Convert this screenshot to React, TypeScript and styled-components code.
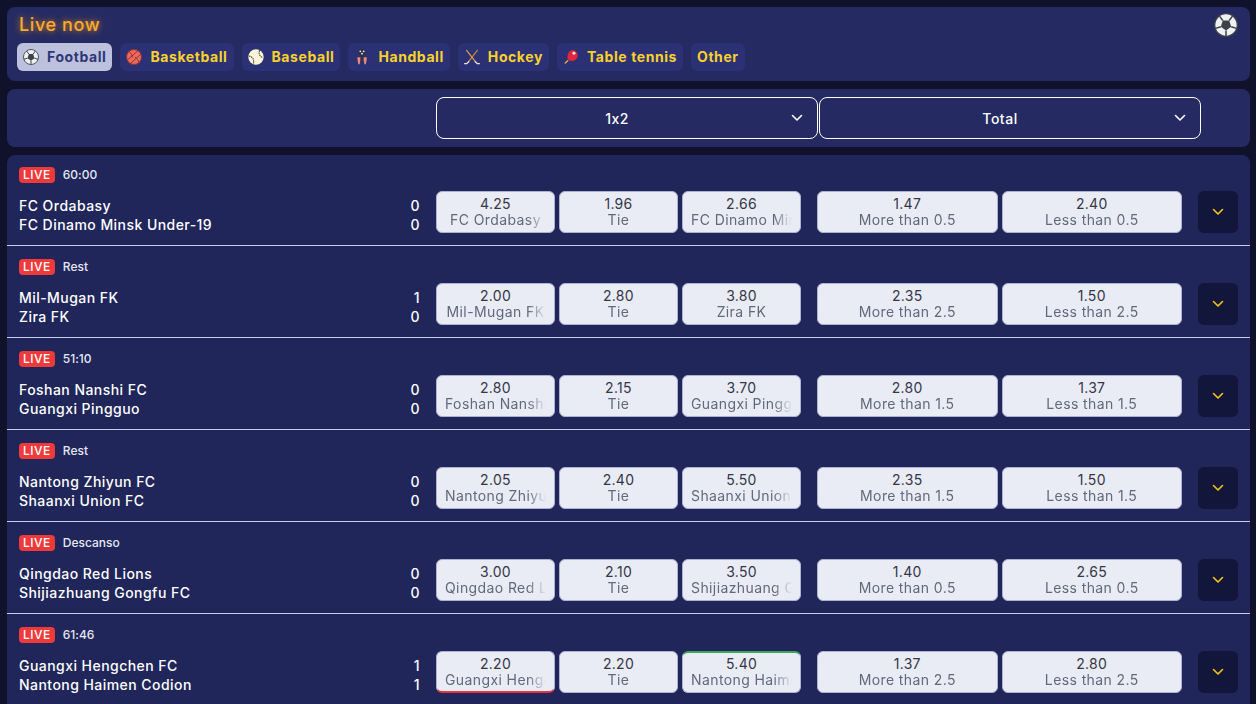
import React from 'react';
import styled, { createGlobalStyle } from 'styled-components';

const GlobalStyle = createGlobalStyle`
  html, body {
    margin: 0;
    padding: 0;
    height: 704px;
    overflow: hidden;
    background: #10122b;
    font-family: 'Inter', 'Liberation Sans', sans-serif;
    font-feature-settings: 'calt' 0;
  }
`;

const SoccerBall = ({ size = 16 }: { size?: number }) => (
  <svg width={size} height={size} viewBox="0 0 24 24">
    <circle cx="12" cy="12" r="11.3" fill="#f0f0f0" stroke="#3b424c" strokeWidth="1.300" />
    <path
      d="M15.200 7.550L18.500 3.100M17.200 13.700L22.500 15.400M12 17.500V23M6.800 13.700L1.500 15.400M8.800 7.550L5.500 3.100"
      stroke="#3b424c"
      strokeWidth="1.500"
    />
    <path d="M15.200 7.550L17.200 13.700 12 17.500 6.800 13.700 8.800 7.550z" fill="#3b424c" />
  </svg>
);

const Basketball = () => (
  <svg width="16" height="16" viewBox="0 0 24 24">
    <circle cx="12" cy="12" r="11.500" fill="#ef6a5e" />
    <g fill="none" stroke="#7c2c28" strokeWidth="1.300">
      <circle cx="12" cy="12" r="11.200" />
      <path d="M2 16.500L18 2.500M6.500 22L22 8M5 4c3 3 4.500 6 4.500 8.500M13.500 12c3 2 5 5 5.500 8" />
    </g>
  </svg>
);

const Baseball = () => (
  <svg width="16" height="16" viewBox="0 0 24 24">
    <circle cx="12" cy="12" r="11.500" fill="#fbf6d8" />
    <g fill="none" stroke="#3a3a3a" strokeWidth="1.600">
      <path d="M17.500 2c-1.500 3-1 6 1 8.500 1 1.200 2.500 2 4 2.300" strokeDasharray="2.200 1.100" />
      <path d="M1.500 10.500c2.500.5 5 2 6.300 4.500 1 2 1 4.500.2 6.800" strokeDasharray="2.200 1.100" />
    </g>
  </svg>
);

const Handball = () => (
  <svg width="16" height="16" viewBox="0 0 24 24">
    <circle cx="12" cy="5" r="5" fill="#2c3042" />
    <g fill="#e8e8ef">
      <circle cx="9.500" cy="3.500" r="1.400" />
      <circle cx="14.500" cy="3.500" r="1.400" />
      <circle cx="12" cy="7" r="1.400" />
    </g>
    <path d="M7 11h10l2 3v6h-3v-4H8v4H5v-6z" fill="#3a2d3c" />
    <path d="M5 12.500h4.500v4l-1 6.500H6.500l-1.200-6.500zM14.500 12.500H19v4l-1.300 6.500h-2l-1.200-6.500z" fill="#e88b7c" />
  </svg>
);

const Hockey = () => (
  <svg width="16" height="16" viewBox="0 0 24 24">
    <circle cx="12" cy="3" r="2" fill="#2a4060" />
    <g fill="none" strokeLinecap="round">
      <path d="M20 2L7 19" stroke="#c98a3c" strokeWidth="1.800" />
      <path d="M4 2l13 17" stroke="#d8a050" strokeWidth="1.800" />
      <path d="M7 19l-3 3H1M17 19l3 3h3" stroke="#f0e6d0" strokeWidth="2" />
    </g>
  </svg>
);

const Paddle = () => (
  <svg width="16" height="16" viewBox="0 0 24 24">
    <path d="M7 16l-5 5 1.500 1.500 5-5z" fill="#e8a63c" />
    <path d="M14.500 1.500a8.500 8.500 0 0 1 7 11c-1 3-4 5.500-8 5.500-1.500 0-3.500-.5-4.500-1l-2-2.500c-.5-1.500-.5-3 0-5 1-4.500 4-8 7.500-8z" fill="#e2263f" />
    <circle cx="16.500" cy="6.500" r="2.200" fill="#f7ecd8" />
  </svg>
);

const Chevron = ({ color }: { color: string }) => (
  <svg width="12" height="8" viewBox="0 0 12 8">
    <path d="M1.500 1.500L6 6l4.500-4.500" fill="none" stroke={color} strokeWidth="1.600" strokeLinecap="round" strokeLinejoin="round" />
  </svg>
);

const sports = [
  { name: 'Football', icon: <SoccerBall /> },
  { name: 'Basketball', icon: <Basketball /> },
  { name: 'Baseball', icon: <Baseball /> },
  { name: 'Handball', icon: <Handball /> },
  { name: 'Hockey', icon: <Hockey /> },
  { name: 'Table tennis', icon: <Paddle /> },
  { name: 'Other', icon: null },
];

interface Odd {
  value: string;
  label: string;
  mark?: 'up' | 'down';
}

interface Match {
  time: string;
  home: string;
  away: string;
  score: [number, number];
  main: Odd[];
  total: Odd[];
}

const matches: Match[] = [
  {
    time: '60:00', home: 'FC Ordabasy', away: 'FC Dinamo Minsk Under-19', score: [0, 0],
    main: [{ value: '4.25', label: 'FC Ordabasy' }, { value: '1.96', label: 'Tie' }, { value: '2.66', label: 'FC Dinamo Minsk Under-19' }],
    total: [{ value: '1.47', label: 'More than 0.5' }, { value: '2.40', label: 'Less than 0.5' }],
  },
  {
    time: 'Rest', home: 'Mil-Mugan FK', away: 'Zira FK', score: [1, 0],
    main: [{ value: '2.00', label: 'Mil-Mugan FK' }, { value: '2.80', label: 'Tie' }, { value: '3.80', label: 'Zira FK' }],
    total: [{ value: '2.35', label: 'More than 2.5' }, { value: '1.50', label: 'Less than 2.5' }],
  },
  {
    time: '51:10', home: 'Foshan Nanshi FC', away: 'Guangxi Pingguo', score: [0, 0],
    main: [{ value: '2.80', label: 'Foshan Nanshi FC' }, { value: '2.15', label: 'Tie' }, { value: '3.70', label: 'Guangxi Pingguo' }],
    total: [{ value: '2.80', label: 'More than 1.5' }, { value: '1.37', label: 'Less than 1.5' }],
  },
  {
    time: 'Rest', home: 'Nantong Zhiyun FC', away: 'Shaanxi Union FC', score: [0, 0],
    main: [{ value: '2.05', label: 'Nantong Zhiyun FC' }, { value: '2.40', label: 'Tie' }, { value: '5.50', label: 'Shaanxi Union FC' }],
    total: [{ value: '2.35', label: 'More than 1.5' }, { value: '1.50', label: 'Less than 1.5' }],
  },
  {
    time: 'Descanso', home: 'Qingdao Red Lions', away: 'Shijiazhuang Gongfu FC', score: [0, 0],
    main: [{ value: '3.00', label: 'Qingdao Red Lions' }, { value: '2.10', label: 'Tie' }, { value: '3.50', label: 'Shijiazhuang Gongfu FC' }],
    total: [{ value: '1.40', label: 'More than 0.5' }, { value: '2.65', label: 'Less than 0.5' }],
  },
  {
    time: '61:46', home: 'Guangxi Hengchen FC', away: 'Nantong Haimen Codion', score: [1, 1],
    main: [{ value: '2.20', label: 'Guangxi Hengchen FC', mark: 'down' }, { value: '2.20', label: 'Tie' }, { value: '5.40', label: 'Nantong Haimen Codion', mark: 'up' }],
    total: [{ value: '1.37', label: 'More than 2.5' }, { value: '2.80', label: 'Less than 2.5' }],
  },
];

const OddButton = ({ odd }: { odd: Odd }) => (
  <OddBox $mark={odd.mark}>
    <OddValue>{odd.value}</OddValue>
    <OddLabel>{odd.label}</OddLabel>
  </OddBox>
);

const App: React.FC = () => {
  return (
    <Page>
      <GlobalStyle />
      <Panel>
        <HeaderRow>
          <Title>Live now</Title>
          <SoccerBall size={24} />
        </HeaderRow>
        <Chips>
          {sports.map((s, i) => (
            <Chip key={s.name} $active={i === 0}>
              {s.icon}
              <span>{s.name}</span>
            </Chip>
          ))}
        </Chips>
      </Panel>

      <SelectPanel>
        <SelectBox>
          <span>1x2</span>
          <Chevron color="#ffffff" />
        </SelectBox>
        <SelectBox>
          <span>Total</span>
          <Chevron color="#ffffff" />
        </SelectBox>
      </SelectPanel>

      <MatchList>
        {matches.map((m) => (
          <MatchRow key={m.home}>
            <StatusLine>
              <LiveBadge>LIVE</LiveBadge>
              <MatchTime>{m.time}</MatchTime>
            </StatusLine>
            <MatchBody>
              <Teams>
                <TeamLine><span>{m.home}</span><span>{m.score[0]}</span></TeamLine>
                <TeamLine><span>{m.away}</span><span>{m.score[1]}</span></TeamLine>
              </Teams>
              <OddsGroup>
                {m.main.map((o, i) => <OddButton key={i} odd={o} />)}
              </OddsGroup>
              <TotalGroup>
                {m.total.map((o, i) => <OddButton key={i} odd={o} />)}
              </TotalGroup>
              <ExpandButton><Chevron color="#f5c518" /></ExpandButton>
            </MatchBody>
          </MatchRow>
        ))}
      </MatchList>
    </Page>
  );
};

const Page = styled.div`
  display: flex;
  flex-direction: column;
  gap: 8px;
  padding: 7px 6px 0 7px;
`;

const Panel = styled.section`
  background: #252b62;
  border-radius: 8px;
  padding: 6px 12px 10px 10px;
  height: 58px;
`;

const HeaderRow = styled.div`
  display: flex;
  justify-content: space-between;
  align-items: center;
  height: 24px;
  padding-left: 2px;
  margin-bottom: 6px;
`;

const Title = styled.h1`
  margin: 0 0 2px;
  font-size: 18px;
  font-weight: 500;
  letter-spacing: 0.6px;
  color: #f6ac2e;
  text-shadow: 0 0 6px #f08a12;
`;

const Chips = styled.div`
  display: flex;
  gap: 8px;
`;

const Chip = styled.div<{ $active: boolean }>`
  display: flex;
  align-items: center;
  gap: 8px;
  height: 28px;
  box-sizing: border-box;
  padding: 0 6px 1px;
  border-radius: 6px;
  font-size: 14px;
  font-weight: 700;
  letter-spacing: 0.58px;
  background: ${(p) => (p.$active ? '#bdc1dd' : '#2b3174')};
  color: ${(p) => (p.$active ? '#2e3878' : '#f8d12c')};
`;

const SelectPanel = styled.section`
  display: grid;
  grid-template-columns: 382px 382px;
  gap: 1px;
  align-items: center;
  height: 58px;
  padding-left: 429px;
  background: #252b62;
  border-radius: 8px;
`;

const SelectBox = styled.div`
  display: grid;
  grid-template-columns: 1fr 12px;
  column-gap: 8px;
  align-items: center;
  justify-items: center;
  height: 42px;
  box-sizing: border-box;
  padding: 0 14px;
  border: 1px solid #ffffff;
  border-radius: 8px;
  color: #ffffff;
  font-size: 14px;
  font-weight: 500;
  letter-spacing: 0.5px;
`;

const MatchList = styled.section`
  display: flex;
  flex-direction: column;
  gap: 1px;
  background: #20265a;
  border-radius: 8px 8px 0 0;
`;

const MatchRow = styled.article`
  padding: 12px;
  border-bottom: 1px solid #c9cce6;
`;

const StatusLine = styled.div`
  display: flex;
  align-items: center;
  gap: 8px;
  height: 16px;
  margin-bottom: 8px;
`;

const LiveBadge = styled.span`
  background: #ef3a3c;
  color: #ffffff;
  border-radius: 4px;
  padding: 0 4px;
  font-size: 12px;
  font-weight: 500;
  line-height: 16px;
  letter-spacing: 0.5px;
`;

const MatchTime = styled.span`
  color: #e4e6f3;
  font-size: 12px;
  font-weight: 500;
  padding-bottom: 1px;
`;

const MatchBody = styled.div`
  display: grid;
  grid-template-columns: 401px 365px 365px 40px;
  grid-template-rows: 42px;
  column-gap: 16px;
  align-items: center;
`;

const Teams = styled.div`
  display: flex;
  flex-direction: column;
  align-self: start;
  padding-top: 5px;
`;

const TeamLine = styled.div`
  display: flex;
  justify-content: space-between;
  color: #ffffff;
  font-size: 14px;
  font-weight: 500;
  line-height: 19px;
  letter-spacing: 0.45px;
`;

const OddsGroup = styled.div`
  display: grid;
  grid-template-columns: repeat(3, 1fr);
  gap: 4px;
`;

const TotalGroup = styled.div`
  display: grid;
  grid-template-columns: 1fr 1fr;
  gap: 4px;
`;

const OddBox = styled.div<{ $mark?: 'up' | 'down' }>`
  box-sizing: border-box;
  height: 42px;
  padding: 4px 8px 0;
  background: #e9ebf5;
  border: 1px solid #aeb2d0;
  border-radius: 6px;
  text-align: center;
  overflow: hidden;
  ${(p) => p.$mark === 'up' && 'border-top: 2px solid #3fa55b; padding-top: 3px;'}
  ${(p) => p.$mark === 'down' && 'border-bottom: 2px solid #e5343a;'}
`;

const OddValue = styled.div`
  color: #34374a;
  font-size: 14px;
  font-weight: 400;
  line-height: 16px;
  letter-spacing: 0.3px;
`;

const OddLabel = styled.div`
  color: #65687a;
  font-size: 14px;
  line-height: 16px;
  letter-spacing: 0.4px;
  white-space: nowrap;
  overflow: hidden;
  -webkit-mask-image: linear-gradient(to right, #000 82%, transparent 100%);
  mask-image: linear-gradient(to right, #000 82%, transparent 100%);
`;

const ExpandButton = styled.div`
  display: flex;
  align-items: center;
  justify-content: center;
  height: 42px;
  border-radius: 6px;
  background: #12163a;
`;

export default App;
